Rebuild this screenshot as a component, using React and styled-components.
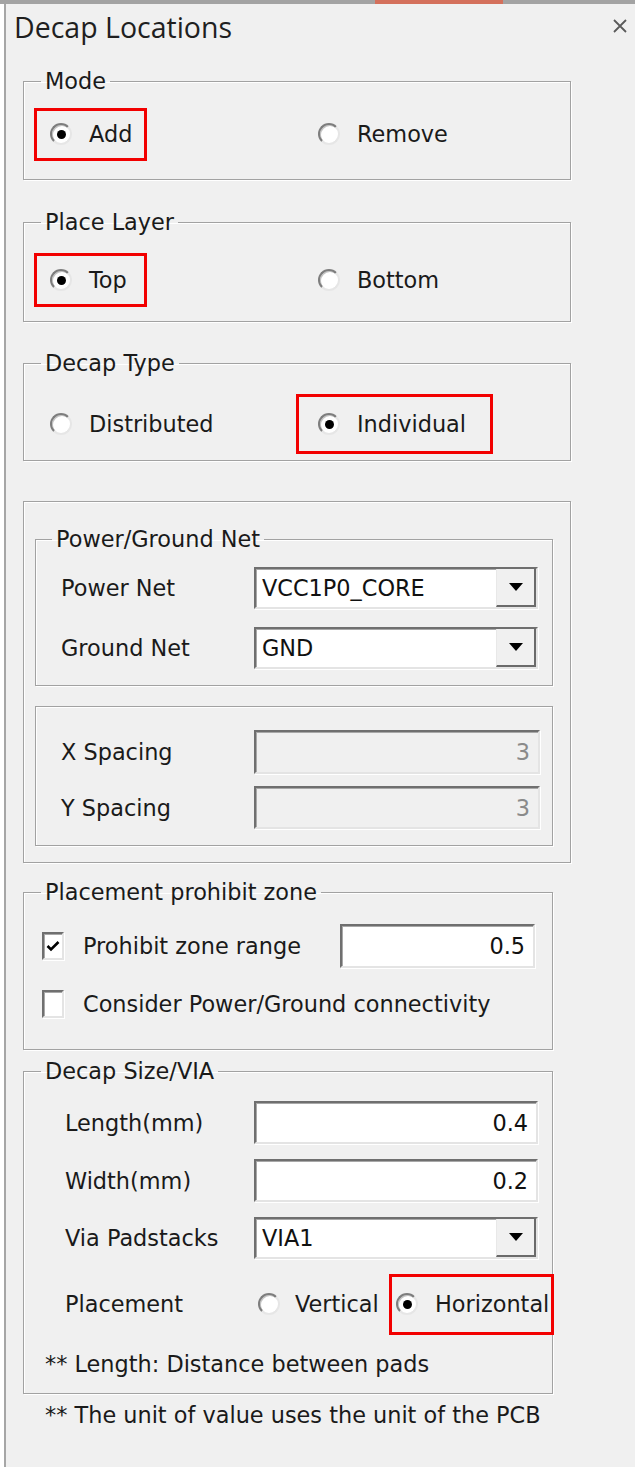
import React from "react";
import styled, { createGlobalStyle, css } from "styled-components";

const GlobalStyle = createGlobalStyle`
  html, body {
    margin: 0;
    padding: 0;
    background: #ffffff;
  }
  body {
    font-family: "DejaVu Sans", "Liberation Sans", sans-serif;
    color: #1a1a1a;
  }
`;

const Screen = styled.div`
  width: 635px;
  height: 1471px;
  display: flex;
  flex-direction: column;
  background: #ffffff;
  overflow: hidden;
`;

const TopStrip = styled.div`
  height: 4px;
  flex-shrink: 0;
  display: flex;
  padding-left: 375px;
  background: #a3a3a3;
`;

const StripAccent = styled.div`
  width: 128px;
  background: #d4705c;
`;

const Window = styled.div`
  height: 1463px;
  margin-left: 4px;
  border-left: 2px solid #a6a6a6;
  background: #f0f0f0;
  display: flex;
  flex-direction: column;
`;

const TitleBar = styled.div`
  height: 46px;
  display: flex;
  align-items: center;
  justify-content: space-between;
  padding: 0 7px 0 8px;
`;

const Title = styled.div`
  font-family: "Open Sans", "Noto Sans", sans-serif;
  font-size: 28.5px;
  line-height: 38px;
  color: #1f1f1f;
`;

const Close = styled.div`
  width: 16px;
  height: 16px;
  display: flex;
  margin-top: -2px;
`;

const Content = styled.div`
  padding: 18px 0 0 17px;
  display: flex;
  flex-direction: column;
`;

const Group = styled.fieldset`
  margin: ${(p) => p.$mt || 0}px 0 0 0;
  padding: 0;
  width: ${(p) => p.$w}px;
  box-sizing: border-box;
  min-inline-size: 0;
  border: 1px solid #a2a2a2;
  box-shadow: 1px 1px 0 #ffffff, inset 1px 1px 0 #ffffff;
`;

const Legend = styled.legend`
  margin-left: ${(p) => p.$ml || 17}px;
  padding: 0 4px;
  font-size: 22.4px;
  line-height: 26px;
  color: #1a1a1a;
`;

const Body = styled.div`
  padding: ${(p) => p.$pad};
  display: flex;
  flex-direction: column;
  gap: ${(p) => p.$gap || 0}px;
`;

const OptionRow = styled.div`
  display: grid;
  grid-template-columns: ${(p) => p.$cols || "268px auto"};
  align-items: center;
`;

const Option = styled.label`
  position: relative;
  display: inline-flex;
  align-items: center;
  gap: ${(p) => p.$gap || 17}px;
  height: 26px;
  font-size: 22.4px;
  line-height: 26px;
  justify-self: start;
  ${(p) =>
    p.$mark &&
    css`
      &::after {
        content: "";
        position: absolute;
        left: ${p.$mark[0]}px;
        top: ${p.$mark[1]}px;
        width: ${p.$mark[2]}px;
        height: ${p.$mark[3]}px;
        box-sizing: border-box;
        border: 3px solid #f20000;
      }
    `}
`;

const RadioCircle = styled.span`
  width: 22px;
  height: 22px;
  border-radius: 50%;
  box-sizing: border-box;
  background: #ffffff;
  border: 2px solid;
  border-color: #7d7d7d #e6e6e6 #e6e6e6 #7d7d7d;
  box-shadow: inset 1px 1px 0 #c4c4c4;
  display: flex;
  align-items: center;
  justify-content: center;
  flex-shrink: 0;
`;

const RadioDot = styled.span`
  width: 9px;
  height: 9px;
  border-radius: 50%;
  background: #000000;
`;

const Radio = ({ checked, label, mark, gap }) => (
  <Option $mark={mark} $gap={gap}>
    <RadioCircle>{checked && <RadioDot />}</RadioCircle>
    {label}
  </Option>
);

const FieldRow = styled.div`
  display: grid;
  grid-template-columns: ${(p) => p.$label}px auto;
  align-items: center;
  margin-top: ${(p) => p.$mt || 0}px;
  font-size: 22.4px;
  line-height: 26px;
`;

const sunken = css`
  box-sizing: border-box;
  border: 2px solid;
  border-color: #6f6f6f #e4e4e4 #e4e4e4 #6f6f6f;
  box-shadow: inset 1px 1px 0 #a8a8a8, 1px 1px 0 #ffffff;
`;

const Field = styled.div`
  ${sunken};
  width: ${(p) => p.$w}px;
  height: ${(p) => p.$h || 43}px;
  background: ${(p) => (p.$disabled ? "#f0f0f0" : "#ffffff")};
  color: ${(p) => (p.$disabled ? "#8a8a8a" : "#111111")};
  display: flex;
  align-items: center;
  justify-content: flex-end;
  padding-right: 8px;
  font-size: 22.4px;
`;

const Combo = styled.div`
  ${sunken};
  width: 284px;
  height: 42px;
  background: #ffffff;
  display: flex;
  align-items: stretch;
  font-size: 22.4px;
`;

const ComboText = styled.div`
  flex: 1;
  display: flex;
  align-items: center;
  padding-left: 6px;
  color: #111111;
`;

const DropButton = styled.div`
  width: 40px;
  background: #f0f0f0;
  border-left: 1px solid #e8e8e8;
  border-right: 2px solid #6a6a6a;
  border-bottom: 2px solid #6a6a6a;
  box-sizing: border-box;
  display: flex;
  align-items: center;
  justify-content: center;
`;

const Arrow = styled.span`
  width: 0;
  height: 0;
  border-left: 7px solid transparent;
  border-right: 7px solid transparent;
  border-top: 8px solid #000000;
`;

const CheckRow = styled.div`
  display: flex;
  align-items: center;
  font-size: 22.4px;
  line-height: 26px;
`;

const CheckBox = styled.span`
  ${sunken};
  width: 22px;
  height: 28px;
  background: #ffffff;
  display: flex;
  align-items: center;
  justify-content: center;
  flex-shrink: 0;
  margin-right: 19px;
`;

const CheckLabel = styled.span`
  flex: 0 0 ${(p) => p.$w || 0}px;
  white-space: nowrap;
`;

const Note = styled.div`
  font-size: 22.4px;
  line-height: 26px;
  margin-left: ${(p) => p.$ml || 0}px;
  margin-top: ${(p) => p.$mt || 0}px;
  white-space: nowrap;
`;

const DropCombo = ({ value }) => (
  <Combo>
    <ComboText>{value}</ComboText>
    <DropButton>
      <Arrow />
    </DropButton>
  </Combo>
);

export default function App() {
  return (
    <Screen>
      <GlobalStyle />
      <TopStrip>
        <StripAccent />
      </TopStrip>
      <Window>
        <TitleBar>
          <Title>Decap Locations</Title>
          <Close>
            <svg width="16" height="16" viewBox="0 0 16 16">
              <path d="M2 2L14 14M14 2L2 14" stroke="#5a5a5a" strokeWidth="1.8" />
            </svg>
          </Close>
        </TitleBar>
        <Content>
          <Group $w={548}>
            <Legend>Mode</Legend>
            <Body $pad="27px 0 32px 26px">
              <OptionRow>
                <Radio checked label="Add" mark={[-16, -13, 113, 53]} />
                <Radio label="Remove" />
              </OptionRow>
            </Body>
          </Group>

          <Group $w={548} $mt={29}>
            <Legend>Place Layer</Legend>
            <Body $pad="32px 0 28px 26px">
              <OptionRow>
                <Radio checked label="Top" mark={[-16, -14, 113, 54]} />
                <Radio label="Bottom" />
              </OptionRow>
            </Body>
          </Group>

          <Group $w={548} $mt={28}>
            <Legend>Decap Type</Legend>
            <Body $pad="35px 0 23px 26px">
              <OptionRow>
                <Radio label="Distributed" />
                <Radio checked label="Individual" mark={[-22, -17, 197, 60]} />
              </OptionRow>
            </Body>
          </Group>

          <Group $w={548} $mt={40}>
            <Body $pad="24px 0 16px 11px" $gap={20}>
              <Group $w={518}>
                <Legend $ml={16}>Power/Ground Net</Legend>
                <Body $pad="15px 0 16px 25px" $gap={18}>
                  <FieldRow $label={193}>
                    <span>Power Net</span>
                    <DropCombo value="VCC1P0_CORE" />
                  </FieldRow>
                  <FieldRow $label={193}>
                    <span>Ground Net</span>
                    <DropCombo value="GND" />
                  </FieldRow>
                </Body>
              </Group>
              <Group $w={518}>
                <Body $pad="23px 0 16px 25px" $gap={12}>
                  <FieldRow $label={193}>
                    <span>X Spacing</span>
                    <Field $w={286} $h={44} $disabled>
                      3
                    </Field>
                  </FieldRow>
                  <FieldRow $label={193}>
                    <span>Y Spacing</span>
                    <Field $w={286} $h={43} $disabled>
                      3
                    </Field>
                  </FieldRow>
                </Body>
              </Group>
            </Body>
          </Group>

          <Group $w={530} $mt={16}>
            <Legend>Placement prohibit zone</Legend>
            <Body $pad="19px 0 31px 18px" $gap={22}>
              <CheckRow>
                <CheckBox>
                  <svg width="14" height="12" viewBox="0 0 14 12">
                    <path d="M1.5 6L5 9.5L12.5 2" fill="none" stroke="#000" strokeWidth="2.6" />
                  </svg>
                </CheckBox>
                <CheckLabel $w={257}>Prohibit zone range</CheckLabel>
                <Field $w={195} $h={44}>
                  0.5
                </Field>
              </CheckRow>
              <CheckRow>
                <CheckBox />
                <CheckLabel>Consider Power/Ground connectivity</CheckLabel>
              </CheckRow>
            </Body>
          </Group>

          <Group $w={530} $mt={8}>
            <Legend>Decap Size/VIA</Legend>
            <Body $pad="17px 0 16px 41px" $gap={15}>
              <FieldRow $label={189}>
                <span>Length(mm)</span>
                <Field $w={284}>0.4</Field>
              </FieldRow>
              <FieldRow $label={189}>
                <span>Width(mm)</span>
                <Field $w={284}>0.2</Field>
              </FieldRow>
              <FieldRow $label={189}>
                <span>Via Padstacks</span>
                <DropCombo value="VIA1" />
              </FieldRow>
              <FieldRow $label={193} $mt={17}>
                <span>Placement</span>
                <OptionRow $cols="138px auto">
                  <Radio label="Vertical" gap={15} />
                  <Radio checked label="Horizontal" gap={17} mark={[-7, -17, 165, 61]} />
                </OptionRow>
              </FieldRow>
              <Note $ml={-20} $mt={19}>** Length: Distance between pads</Note>
            </Body>
          </Group>

          <Note $ml={22} $mt={8}>** The unit of value uses the unit of the PCB</Note>
        </Content>
      </Window>
    </Screen>
  );
}
